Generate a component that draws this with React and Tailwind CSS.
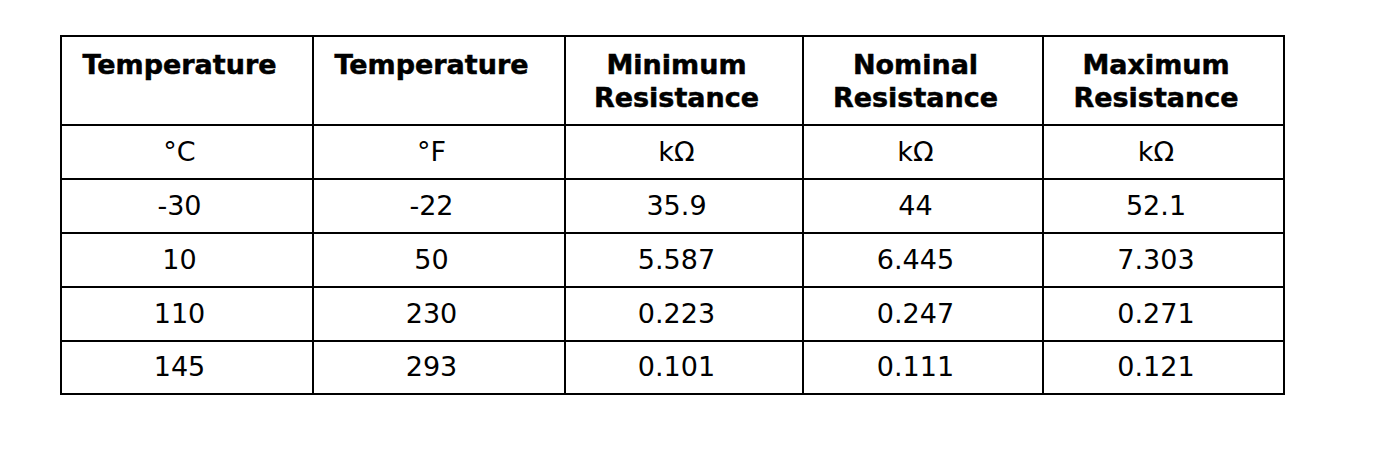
import React from 'react';

const headers = [
    ['Temperature'],
    ['Temperature'],
    ['Minimum', 'Resistance'],
    ['Nominal', 'Resistance'],
    ['Maximum', 'Resistance'],
];

const rows = [
    ['°C', '°F', 'kΩ', 'kΩ', 'kΩ'],
    ['-30', '-22', '35.9', '44', '52.1'],
    ['10', '50', '5.587', '6.445', '7.303'],
    ['110', '230', '0.223', '0.247', '0.271'],
    ['145', '293', '0.101', '0.111', '0.121'],
];

export default function App() {
    return (
        <div className="w-[1376px] h-[452px] bg-white pt-[35px] pl-[60px]" style={{ fontFamily: '"DejaVu Sans", Verdana, sans-serif' }}>
            {/* Table drawn as a grid: black background shows through 2px gaps as the rules */}
            <div className="inline-grid grid-cols-[250px_250px_236px_238px_239px] grid-rows-[87px_52px_52px_52px_52px_51px] gap-[2px] p-[2px] bg-black text-black">
                {headers.map((lines, i) => (
                    <div
                        key={i}
                        className="bg-white pt-[11px] pr-[15px] text-center text-[27px] leading-[33px] font-bold [-webkit-text-stroke:0.5px_black]"
                    >
                        {lines.map((l) => (
                            <div key={l}>{l}</div>
                        ))}
                    </div>
                ))}
                {rows.map((row, r) =>
                    row.map((cell, c) => (
                        <div key={`${r}-${c}`} className="bg-white flex items-center justify-center pr-[15px] text-[27px]">
                            {cell}
                        </div>
                    ))
                )}
            </div>
        </div>
    );
}
